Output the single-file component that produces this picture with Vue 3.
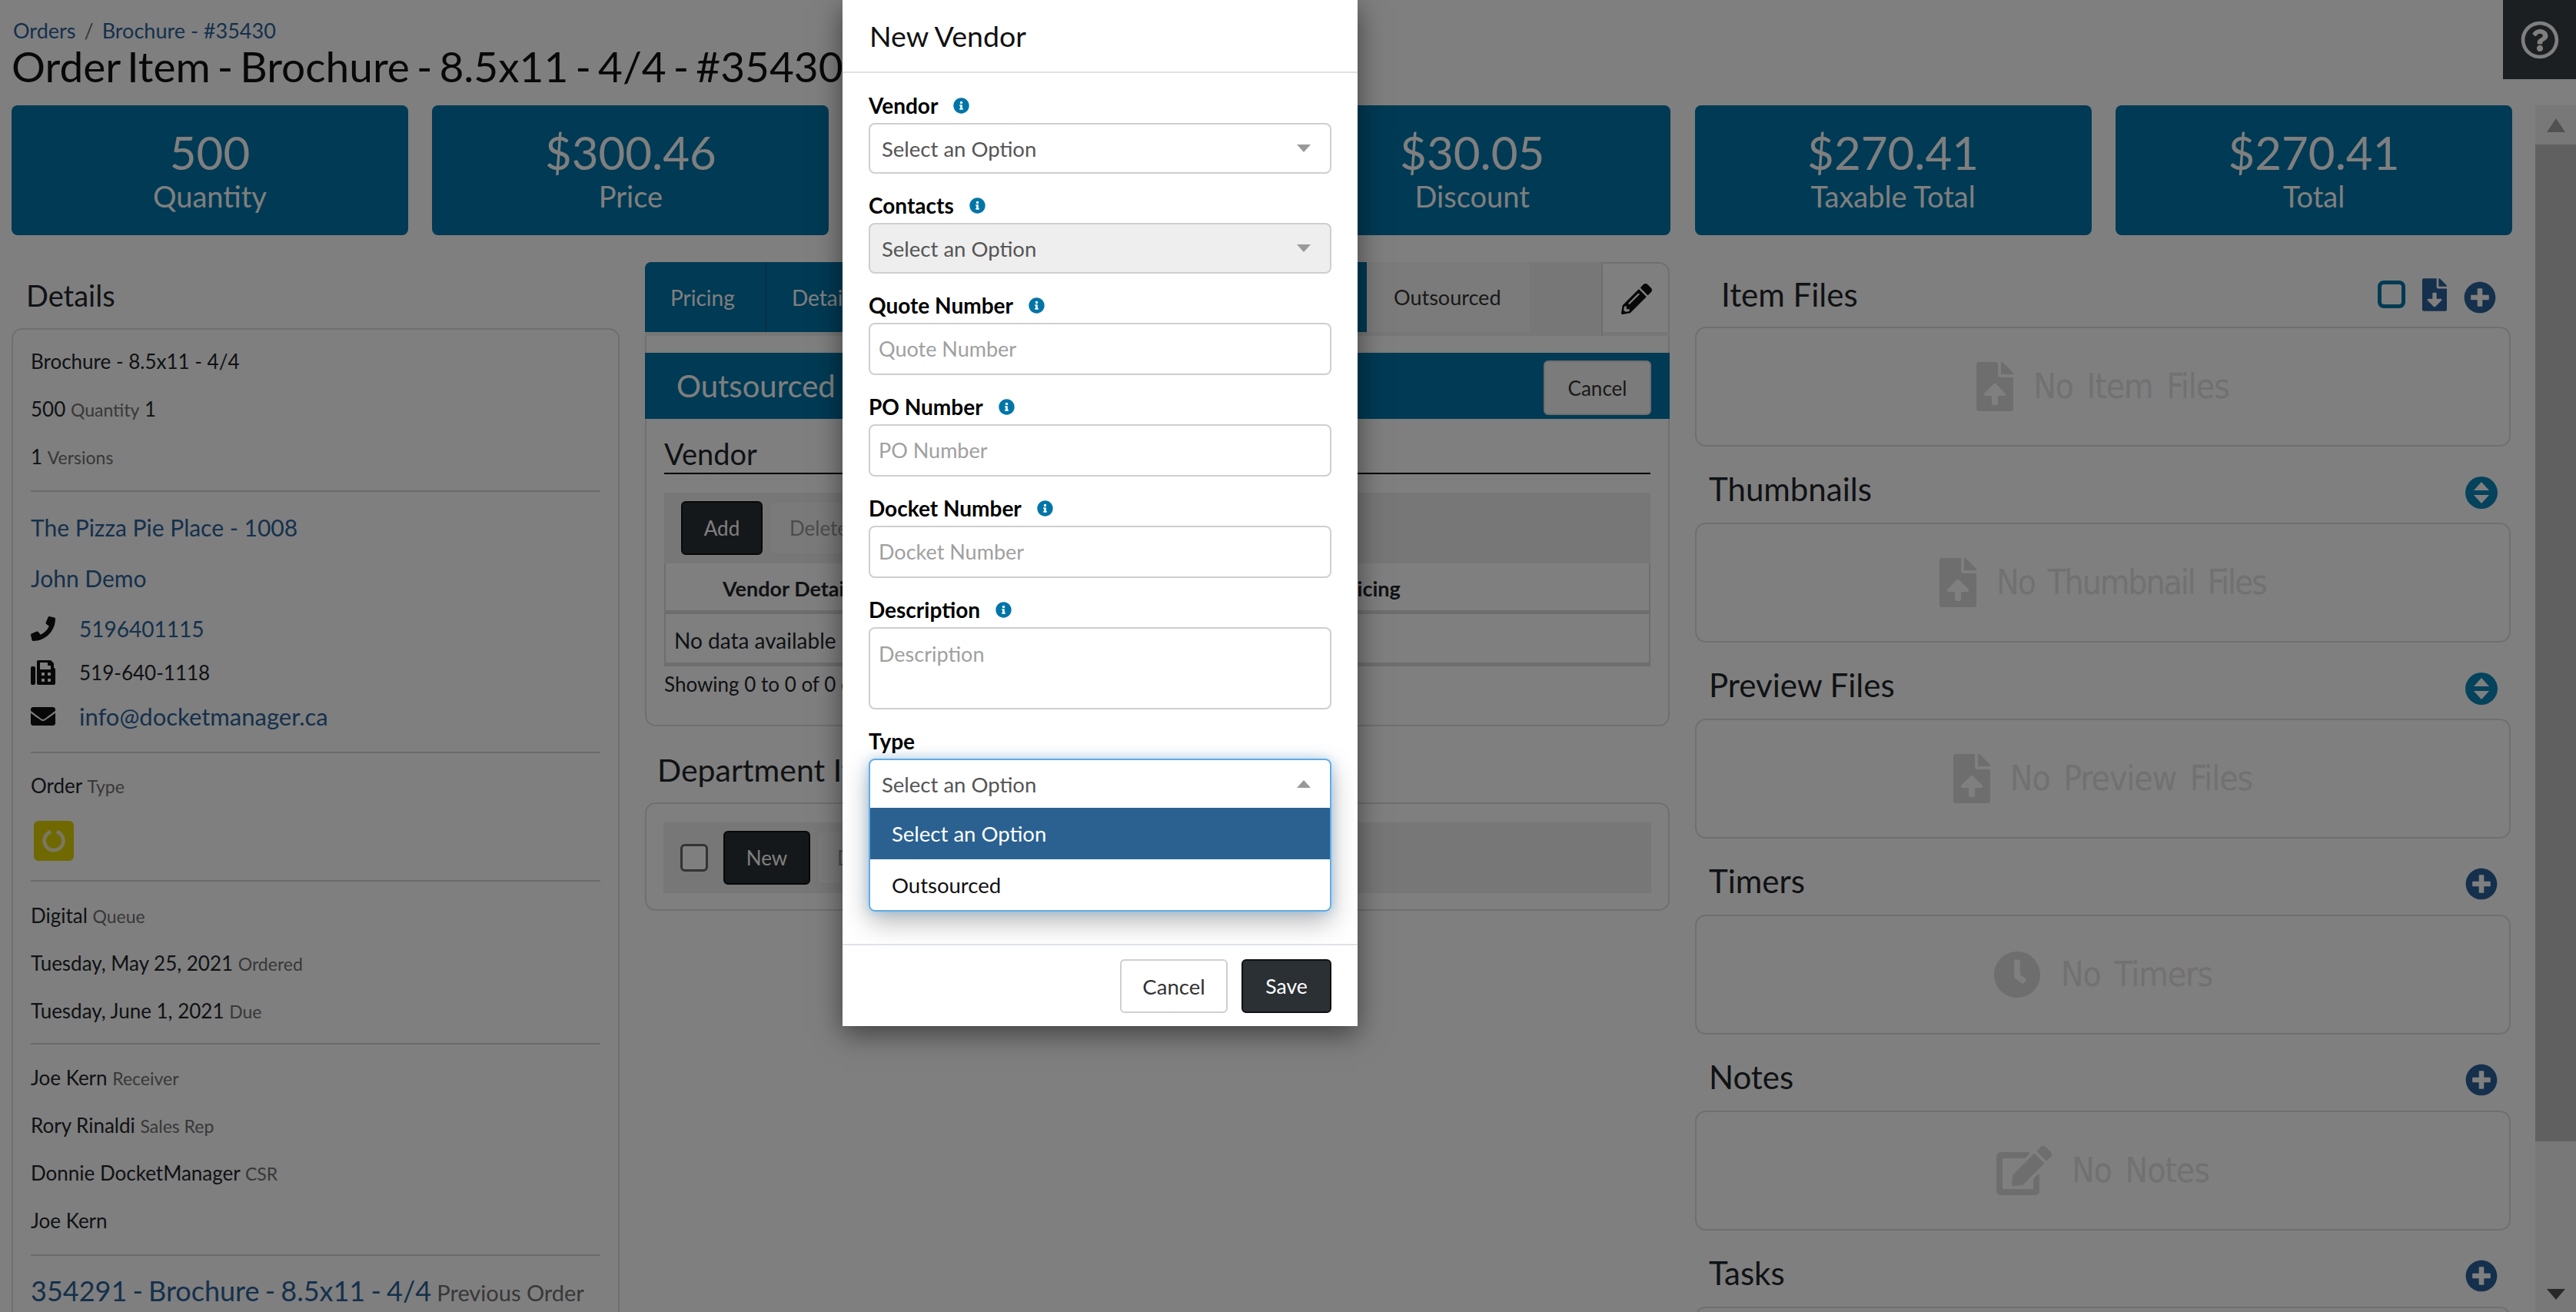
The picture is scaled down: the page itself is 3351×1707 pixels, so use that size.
<script setup>
const stats = [
  ['500', 'Quantity'], ['$300.46', 'Price'], ['$330.51', 'Subtotal'],
  ['$30.05', 'Discount'], ['$270.41', 'Taxable Total'], ['$270.41', 'Total']
]
const P = {
  plus: 'M256 8C119 8 8 119 8 256s111 248 248 248 248-111 248-248S393 8 256 8zm144 276c0 6.6-5.4 12-12 12h-92v92c0 6.6-5.4 12-12 12h-56c-6.6 0-12-5.4-12-12v-92h-92c-6.6 0-12-5.4-12-12v-56c0-6.6 5.4-12 12-12h92v-92c0-6.6 5.4-12 12-12h56c6.6 0 12 5.4 12 12v92h92c6.6 0 12 5.4 12 12v56z',
  info: 'M256 8C119.043 8 8 119.083 8 256c0 136.997 111.043 248 248 248s248-111.003 248-248C504 119.083 392.957 8 256 8zm0 110c23.196 0 42 18.804 42 42s-18.804 42-42 42-42-18.804-42-42 18.804-42 42-42zm56 254c0 6.627-5.373 12-12 12h-88c-6.627 0-12-5.373-12-12v-24c0-6.627 5.373-12 12-12h12v-64h-12c-6.627 0-12-5.373-12-12v-24c0-6.627 5.373-12 12-12h64c6.627 0 12 5.373 12 12v100h12c6.627 0 12 5.373 12 12v24z',
  upload: 'M224 136V0H24C10.7 0 0 10.7 0 24v464c0 13.3 10.7 24 24 24h336c13.3 0 24-10.7 24-24V160H248c-13.2 0-24-10.8-24-24zm65.18 216.01H224v80c0 8.84-7.16 16-16 16h-32c-8.84 0-16-7.16-16-16v-80H94.82c-14.28 0-21.41-17.29-11.27-27.36l96.42-95.7c6.65-6.61 17.39-6.61 24.04 0l96.42 95.7c10.15 10.07 3.03 27.36-11.25 27.36zM377 105L279.1 7c-4.5-4.5-10.6-7-17-7H256v128h128v-6.1c0-6.3-2.5-12.4-7-16.9z',
  download: 'M224 136V0H24C10.7 0 0 10.7 0 24v464c0 13.3 10.7 24 24 24h336c13.3 0 24-10.7 24-24V160H248c-13.2 0-24-10.8-24-24zm76.45 211.36l-96.42 95.7c-6.65 6.61-17.39 6.61-24.04 0l-96.42-95.7C73.42 337.29 80.54 320 94.82 320H160v-80c0-8.84 7.16-16 16-16h32c8.84 0 16 7.16 16 16v80h65.18c14.28 0 21.4 17.29 11.27 27.36zM377 105L279.1 7c-4.5-4.5-10.6-7-17-7H256v128h128v-6.1c0-6.3-2.5-12.4-7-16.9z',
  clock: 'M256,8C119,8,8,119,8,256S119,504,256,504,504,393,504,256,393,8,256,8Zm92.49,313h0l-20,25a16,16,0,0,1-22.49,2.5h0l-67-49.72a40,40,0,0,1-15-31.23V112a16,16,0,0,1,16-16h32a16,16,0,0,1,16,16V256l58,42.5A16,16,0,0,1,348.49,321Z',
  phone: 'M493.4 24.6l-104-24c-11.3-2.6-22.9 3.3-27.5 13.9l-48 112c-4.2 9.8-1.4 21.3 6.9 28l60.6 49.6c-36 76.7-98.9 140.5-177.2 177.2l-49.6-60.6c-6.8-8.3-18.2-11.1-28-6.9l-112 48C3.9 366.5-2 378.1.6 389.4l24 104C27.1 504.2 36.7 512 48 512c256.1 0 464-207.5 464-464 0-11.2-7.7-20.9-18.6-23.4z',
  fax: 'M480 160V77.25a32 32 0 0 0-9.38-22.63L425.37 9.37A32 32 0 0 0 402.75 0H160a32 32 0 0 0-32 32v448a32 32 0 0 0 32 32h320a32 32 0 0 0 32-32V192a32 32 0 0 0-32-32zM288 432a16 16 0 0 1-16 16h-32a16 16 0 0 1-16-16v-32a16 16 0 0 1 16-16h32a16 16 0 0 1 16 16zm0-128a16 16 0 0 1-16 16h-32a16 16 0 0 1-16-16v-32a16 16 0 0 1 16-16h32a16 16 0 0 1 16 16zm128 128a16 16 0 0 1-16 16h-32a16 16 0 0 1-16-16v-32a16 16 0 0 1 16-16h32a16 16 0 0 1 16 16zm0-128a16 16 0 0 1-16 16h-32a16 16 0 0 1-16-16v-32a16 16 0 0 1 16-16h32a16 16 0 0 1 16 16zm0-112H192V48h160v48a16 16 0 0 0 16 16h48zM64 128H32a32 32 0 0 0-32 32v320a32 32 0 0 0 32 32h32a32 32 0 0 0 32-32V160a32 32 0 0 0-32-32z',
  mail: 'M502.3 190.8c3.9-3.1 9.7-.2 9.7 4.7V400c0 26.5-21.5 48-48 48H48c-26.5 0-48-21.5-48-48V195.6c0-5 5.7-7.8 9.7-4.7 22.4 17.4 52.1 39.5 154.1 113.6 21.1 15.4 56.7 47.8 92.2 47.6 35.7.3 72-32.8 92.3-47.6 102-74.1 131.6-96.3 154-113.7zM256 320c23.2.4 56.6-29.2 73.4-41.4 132.7-96.3 142.8-104.7 173.4-128.7 5.8-4.5 9.2-11.5 9.2-18.9v-19c0-26.5-21.5-48-48-48H48C21.5 64 0 85.5 0 112v19c0 7.4 3.4 14.3 9.2 18.9 30.6 23.9 40.7 32.4 173.4 128.7 16.8 12.2 50.2 41.8 73.4 41.4z',
  pencil: 'M497.9 142.1l-46.1 46.1c-4.7 4.7-12.3 4.7-17 0l-111-111c-4.7-4.7-4.7-12.3 0-17l46.1-46.1c18.7-18.7 49.1-18.7 67.9 0l60.1 60.1c18.8 18.7 18.8 49.1 0 67.9zM284.2 99.8L21.6 362.4.4 483.9c-2.9 16.4 11.4 30.6 27.8 27.8l121.5-21.3 262.6-262.6c4.7-4.7 4.7-12.3 0-17l-111-111c-4.8-4.7-12.4-4.7-17.1 0zM124.1 339.9c-5.5-5.5-5.5-14.3 0-19.8l154-154c5.5-5.5 14.3-5.5 19.8 0s5.5 14.3 0 19.8l-154 154c-5.5 5.5-14.3 5.5-19.8 0zM88 424h48v36.3l-64.5 11.3-31.1-31.1L51.7 376H88v48z',
  edit: 'M402.6 83.2l90.2 90.2c3.8 3.8 3.8 10 0 13.8L274.4 405.6l-92.8 10.3c-12.4 1.4-22.9-9.1-21.5-21.5l10.3-92.8L388.8 83.2c3.8-3.8 10-3.8 13.8 0zm162-22.9l-48.8-48.8c-15.2-15.2-39.9-15.2-55.2 0l-35.4 35.4c-3.8 3.8-3.8 10 0 13.8l90.2 90.2c3.8 3.8 10 3.8 13.8 0l35.4-35.4c15.2-15.3 15.2-40 0-55.2zM384 346.2V448H64V128h229.8c3.2 0 6.2-1.3 8.5-3.5l40-40c7.6-7.6 2.2-20.5-8.5-20.5H48C21.5 64 0 85.5 0 112v352c0 26.5 21.5 48 48 48h352c26.5 0 48-21.5 48-48V306.2c0-10.7-12.9-16-20.5-8.5l-40 40c-2.2 2.3-3.5 5.3-3.5 8.5z',
  help: 'M256 8C119.043 8 8 119.083 8 256c0 136.997 111.043 248 248 248s248-111.003 248-248C504 119.083 392.957 8 256 8zm0 448c-110.532 0-200-89.431-200-200 0-110.495 89.472-200 200-200 110.491 0 200 89.471 200 200 0 110.53-89.431 200-200 200zm107.244-255.2c0 67.052-72.421 68.084-72.421 92.863V300c0 6.627-5.373 12-12 12h-45.647c-6.627 0-12-5.373-12-12v-8.659c0-35.745 27.1-50.034 47.579-61.516 17.561-9.845 28.324-16.541 28.324-29.579 0-17.246-21.999-28.693-39.784-28.693-23.189 0-33.894 10.977-48.942 29.969-4.057 5.12-11.46 6.071-16.666 2.124l-27.824-21.098c-5.107-3.872-6.251-11.066-2.644-16.363C184.846 131.491 214.94 112 261.794 112c49.071 0 101.45 38.304 101.45 88.8zM298 368c0 23.159-18.841 42-42 42s-42-18.841-42-42 18.841-42 42-42 42 18.841 42 42z'
}
const panels = [
  { title: 'Thumbnails', action: 'sort', icon: 'upload', vb: '0 0 384 512', empty: 'No Thumbnail Files', track: -2 },
  { title: 'Preview Files', action: 'sort', icon: 'upload', vb: '0 0 384 512', empty: 'No Preview Files', track: -1 },
  { title: 'Timers', action: 'plus', icon: 'clock', vb: '0 0 512 512', empty: 'No Timers', track: -1 },
  { title: 'Notes', action: 'plus', icon: 'edit', vb: '0 0 576 512', empty: 'No Notes', track: -1 }
]
const fields = [
  { label: 'Quote Number' }, { label: 'PO Number' }, { label: 'Docket Number' }
]
</script>

<template>
  <div class="page">
    <header class="top">
      <nav class="crumbs"><a>Orders</a><i>/</i><a>Brochure - #35430</a></nav>
      <h1>Order Item - Brochure - 8.5x11 - 4/4 - #354301</h1>
      <button class="help"><svg viewBox="0 0 512 512"><path :d="P.help" /></svg></button>
    </header>

    <div class="body">
      <main class="content">
        <section class="stats">
          <div v-for="s in stats" :key="s[1]" class="stat">
            <div class="num">{{ s[0] }}</div>
            <div class="cap">{{ s[1] }}</div>
          </div>
        </section>

        <div class="cols">
          <aside class="left">
            <h3 class="details-h">Details</h3>
            <div class="card details">
              <div class="sec s1">
                <p>Brochure - 8.5x11 - 4/4</p>
                <p>500 <small>Quantity</small> 1</p>
                <p>1 <small>Versions</small></p>
              </div>
              <div class="sec contact">
                <p class="lnk"><a>The Pizza Pie Place - 1008</a></p>
                <p class="lnk"><a>John Demo</a></p>
                <p class="ico ph"><svg viewBox="0 0 512 512"><path :d="P.phone" /></svg><a>5196401115</a></p>
                <p class="ico"><svg viewBox="0 0 512 512"><path :d="P.fax" /></svg>519-640-1118</p>
                <p class="ico em"><svg viewBox="0 0 512 512"><path :d="P.mail" /></svg><a>info@docketmanager.ca</a></p>
              </div>
              <div class="sec order">
                <p>Order <small>Type</small></p>
                <div class="badge"><svg viewBox="0 0 40 40"><path d="M16 7.5a13 13 0 1 0 8 0" /></svg></div>
              </div>
              <div class="sec s4">
                <p>Digital <small>Queue</small></p>
                <p>Tuesday, May 25, 2021 <small>Ordered</small></p>
                <p>Tuesday, June 1, 2021 <small>Due</small></p>
              </div>
              <div class="sec s5">
                <p>Joe Kern <small>Receiver</small></p>
                <p>Rory Rinaldi <small>Sales Rep</small></p>
                <p>Donnie DocketManager <small>CSR</small></p>
                <p>Joe Kern</p>
              </div>
              <div class="sec prev">
                <a>354291 - Brochure - 8.5x11 - 4/4</a> <small>Previous Order</small>
              </div>
            </div>
          </aside>

          <div class="center">
            <div class="card main">
              <div class="tabs">
                <span class="tab t1">Pricing</span>
                <span class="tab t2">Details</span>
                <span class="tab on">Outsourced</span>
                <span class="spacer"></span>
                <span class="pen"><svg viewBox="0 0 512 512"><path :d="P.pencil" /></svg></span>
              </div>
              <div class="bar">
                <span>Outsourced Services</span>
                <button class="btn-cancel">Cancel</button>
              </div>
              <div class="inner">
                <h3 class="vendor-h">Vendor</h3>
                <div class="toolbar">
                  <button class="dark add">Add</button>
                  <button class="ghost">Delete</button>
                </div>
                <div class="th">
                  <b class="th1">Vendor Details</b>
                  <b class="th2">Pricing</b>
                </div>
                <div class="td">No data available in table</div>
                <div class="showing">Showing 0 to 0 of 0 entries</div>
              </div>
            </div>
            <h3 class="dept-h">Department Items</h3>
            <div class="card dept">
              <div class="toolbar t2b">
                <span class="check"></span>
                <button class="dark new">New</button>
                <button class="ghost">Delete</button>
              </div>
            </div>
          </div>

          <aside class="right">
            <div class="head first">
              <h3>Item Files</h3>
              <div class="acts">
                <span class="box"></span>
                <svg class="dl" viewBox="0 0 384 512"><path :d="P.download" /></svg>
                <svg class="pl" viewBox="0 0 512 512"><path :d="P.plus" /></svg>
              </div>
            </div>
            <div class="card empty">
              <svg class="eico" viewBox="0 0 384 512"><path :d="P.upload" /></svg>
              <span>No Item Files</span>
            </div>
            <template v-for="p in panels" :key="p.title">
              <div class="head">
                <h3>{{ p.title }}</h3>
                <svg v-if="p.action === 'plus'" class="pl" viewBox="0 0 512 512"><path :d="P.plus" /></svg>
                <svg v-else class="sort" viewBox="0 0 42 42">
                  <circle cx="21" cy="21" r="21" />
                  <path class="w" d="M21 7l10 11H11zM21 35l10-11H11z" />
                </svg>
              </div>
              <div class="card empty">
                <svg class="eico" :class="p.icon" :viewBox="p.vb"><path :d="P[p.icon]" /></svg>
                <span :style="{ letterSpacing: p.track + 'px' }">{{ p.empty }}</span>
              </div>
            </template>
            <div class="head">
              <h3>Tasks</h3>
              <svg class="pl" viewBox="0 0 512 512"><path :d="P.plus" /></svg>
            </div>
            <div class="card empty"></div>
          </aside>
        </div>
      </main>

      <div class="scrollbar">
        <div class="sb-btn"><i class="up"></i></div>
        <div class="thumb"></div>
        <div class="sb-end"><i class="down"></i></div>
      </div>
    </div>

    <div class="overlay">
      <div class="modal">
        <div class="m-head">New Vendor</div>
        <div class="m-body">
          <div class="field">
            <label>Vendor <svg class="inf" viewBox="0 0 512 512"><path :d="P.info" /></svg></label>
            <div class="sel"><span>Select an Option</span><i class="caret"></i></div>
          </div>
          <div class="field">
            <label>Contacts <svg class="inf" viewBox="0 0 512 512"><path :d="P.info" /></svg></label>
            <div class="sel off"><span>Select an Option</span><i class="caret"></i></div>
          </div>
          <div v-for="f in fields" :key="f.label" class="field">
            <label>{{ f.label }} <svg class="inf" viewBox="0 0 512 512"><path :d="P.info" /></svg></label>
            <div class="inp">{{ f.label }}</div>
          </div>
          <div class="field">
            <label>Description <svg class="inf" viewBox="0 0 512 512"><path :d="P.info" /></svg></label>
            <div class="inp area">Description</div>
          </div>
          <div class="field last">
            <label>Type</label>
            <div class="sel open">
              <div class="trigger"><span>Select an Option</span><i class="caret up"></i></div>
              <div class="opt hi">Select an Option</div>
              <div class="opt">Outsourced</div>
            </div>
          </div>
        </div>
        <div class="m-foot">
          <button class="b-cancel">Cancel</button>
          <button class="b-save">Save</button>
        </div>
      </div>
    </div>
  </div>
</template>

<style>
html, body { margin: 0; background: #fff; }
</style>

<style scoped>
.page {
  position: relative;
  width: 3351px;
  height: 1707px;
  overflow: hidden;
  background: #fff;
  color: #212529;
  font-family: Lato, "Noto Sans", sans-serif;
  font-size: 26px;
  line-height: 42px;
}
a { color: #2a6199; }
svg { display: block; }
p { margin: 0; }
h1, h3 { margin: 0; font-weight: 400; }
button { font-family: inherit; }

.top { position: relative; height: 137px; padding-left: 17px; box-sizing: border-box; }
.crumbs { height: 62px; padding-top: 19px; box-sizing: border-box; font-size: 27px; line-height: 42px; }
.crumbs i { font-style: normal; color: #6c757d; margin: 0 11px; }
h1 { font-size: 55px; line-height: 48px; white-space: nowrap; color: #111; margin-left: -2px; word-spacing: -5px; }
.help {
  position: absolute; top: 0; right: 0; width: 95px; height: 103px;
  background: #383e42; border: 0; padding: 0;
  display: flex; align-items: center; justify-content: center;
}
.help svg { width: 50px; height: 50px; fill: #fff; }

.body { display: flex; height: 1570px; }
.content { width: 3298px; padding-left: 15px; box-sizing: border-box; }
.stats { display: flex; gap: 31.4px; height: 169px; margin-bottom: 35px; }
.stat {
  width: 516px; height: 169px; border-radius: 8px; background: #0275a8; color: #fff;
  text-align: center; box-sizing: border-box; padding-top: 29px;
}
.num { font-size: 60px; line-height: 64px; }
.cap { font-size: 38px; line-height: 50px; }

.cols { display: flex; align-items: flex-start; }
.card { border: 2px solid #dfdfdf; border-radius: 14px; background: #fff; box-sizing: border-box; }

.left { width: 791px; margin-right: 33px; }
.details-h { font-size: 38px; line-height: 86px; height: 86px; padding-left: 19px; }
.details { padding: 0 23px; height: 1400px; }
.sec { padding: 22px 0 21px; border-top: 2px solid #d5d5d5; }
.sec:first-child { border-top: 0; }
.sec > p { margin-bottom: 20px; }
.sec > p:last-child { margin-bottom: 0; }
small { font-size: 23px; color: #707070; line-height: 1; }
.s1 { padding: 20px 0 23px; }
.s4 { padding-top: 23px; }
.s5 { padding-bottom: 23px; }
.contact { padding-bottom: 25px; padding-top: 22px; }
.contact .lnk { font-size: 30px; line-height: 48px; margin-bottom: 18px; }
.contact .lnk + .ico { margin-top: 21px; }
.contact .ico { display: flex; align-items: center; margin-bottom: 15px; }
.contact .ico svg { width: 32px; height: 32px; margin-right: 31px; fill: #111; }
.contact .ph a { font-size: 28px; }
.contact .em a { font-size: 31px; }
.order { padding: 21px 0 25px; }
.badge {
  width: 52px; height: 52px; background: #e1d000; border-radius: 6px; margin: 25px 0 0 4px;
  display: flex; align-items: center; justify-content: center;
}
.badge svg { width: 38px; height: 38px; }
.badge path { fill: none; stroke: #f6f0c0; stroke-width: 5; }
.prev { font-size: 36px; line-height: 50px; padding-top: 20px; white-space: nowrap; word-spacing: -2px; }
.prev small { font-size: 29px; word-spacing: 0; }

.center { width: 1333px; margin-right: 33px; }
.main { height: 604px; }
.tabs { display: flex; border-bottom: 5px solid #eeeeee; box-sizing: content-box; margin: -2px -2px 0; height: 91px; }
.tab { display: flex; align-items: center; font-size: 28px; box-sizing: border-box; padding-left: 33px; height: 91px; }
.t1 { width: 158px; background: #0275a8; color: #fff; border-radius: 8px 0 0 0; border-right: 1px solid #02506f; }
.t2 { width: 781px; background: #0275a8; color: #fff; }
.on { width: 212px; background: #f7f7f7; color: #333; padding-left: 35px; font-size: 27px; }
.spacer { width: 93px; background: #eeeeee; }
.pen { flex: 1; display: flex; align-items: center; justify-content: center; border-left: 2px solid #ddd; height: 96px; }
.pen svg { width: 40px; height: 40px; fill: #111; }
.bar {
  margin: 22px -2px 0; height: 86px; background: #0275a8; color: #fff;
  display: flex; align-items: center; justify-content: space-between;
  font-size: 40px; padding: 0 24px 0 41px; box-sizing: border-box;
}
.btn-cancel {
  width: 140px; height: 71px; background: #f7f7f7; border: 2px solid #ddd; border-radius: 6px;
  color: #333; font-size: 26px; margin-top: 5px;
}
.inner { padding: 24px 23px 0; }
.vendor-h { font-size: 38px; line-height: 42px; border-bottom: 2px solid #000; height: 46px; }
.toolbar { background: #eeeeee; display: flex; align-items: center; }
.inner .toolbar { margin-top: 24px; height: 92px; padding-left: 22px; gap: 8px; }
.dark { background: #2b3035; color: #fff; border: 2px solid #111; border-radius: 6px; font-size: 26px; }
.add { width: 106px; height: 70px; }
.ghost { width: 130px; height: 70px; background: #f5f5f5; border: 2px solid #ececec; color: #999; border-radius: 6px; font-size: 26px; }
.th { height: 66px; padding-top: 5px; border: 2px solid #ddd; border-top: 0; border-bottom: 5px solid #dcdcdc; box-sizing: border-box; display: flex; align-items: center; font-size: 27px; }
.th1 { margin-left: 74px; }
.th2 { margin-left: 622px; }
.td { height: 68px; padding-top: 4px; border: 2px solid #ddd; border-top: 0; border-bottom: 5px solid #dcdcdc; box-sizing: border-box; padding-left: 11px; display: flex; align-items: center; font-size: 28px; white-space: nowrap; }
.showing { line-height: 46px; }
.dept-h { font-size: 41px; line-height: 50px; margin: 32px 0 17px 16px; }
.dept { height: 141px; padding: 24px 22px 0; }
.t2b { height: 92px; padding-left: 22px; }
.check { width: 36px; height: 36px; border: 3px solid #666; border-radius: 6px; background: #fff; box-sizing: border-box; margin-right: 20px; }
.new { width: 113px; height: 70px; margin-right: 8px; }

.right { width: 1061px; }
.head { height: 88px; margin-top: 11px; display: flex; align-items: center; justify-content: space-between; padding: 0 17px 0 18px; }
.head.first { height: 84px; margin-top: 0; padding-left: 34px; padding-right: 19px; }
.head h3 { font-size: 42px; line-height: 50px; }
.acts { display: flex; align-items: center; gap: 22px; }
.box { width: 36px; height: 36px; border: 5px solid #0275a8; border-radius: 8px; box-sizing: border-box; }
.dl { width: 32px; height: 43px; fill: #2a6199; }
.pl { width: 42px; height: 42px; fill: #2a6199; margin-top: 8px; }
.sort circle { fill: #0a86b8; }
.sort { width: 42px; height: 42px; margin-top: 10px; }
.sort .w { fill: #fff; }
.empty {
  height: 156px; display: flex; align-items: center; justify-content: center; gap: 26px;
  color: #e2e2e2; font-size: 44px; font-weight: 300; letter-spacing: -1px; word-spacing: 6px;
  font-family: "DejaVu Sans Condensed", "DejaVu Sans", sans-serif; font-stretch: condensed;
}
.eico { height: 64px; width: 48px; fill: #dcdcdc; }
.eico.clock { width: 62px; height: 62px; }
.eico.edit { width: 72px; height: 64px; }

.scrollbar { width: 53px; height: 1570px; background: #f1f1f1; display: flex; flex-direction: column; }
.sb-btn { height: 51px; display: flex; align-items: center; justify-content: center; }
.sb-btn .up, .sb-end .down { width: 0; height: 0; border-left: 12px solid transparent; border-right: 12px solid transparent; }
.sb-btn .up { border-bottom: 18px solid #a3a3a3; }
.thumb { height: 1297px; background: #c1c1c1; }
.sb-end { flex: 1; display: flex; align-items: flex-end; justify-content: center; padding-bottom: 16px; }
.sb-end .down { border-top: 14px solid #505050; }

.overlay { position: absolute; inset: 0; background: rgba(0, 0, 0, .5); }
.modal {
  width: 670px; height: 1335px; margin-left: 1096px; background: #fff;
  box-shadow: 0 10px 34px rgba(0, 0, 0, .5); color: #212529; font-size: 27.5px;
  display: flex; flex-direction: column;
}
.m-head { height: 95px; box-sizing: border-box; flex: none; line-height: 93px; font-size: 37.5px; padding-left: 35px; border-bottom: 2px solid #dee2e6; color: #111; }
.m-body { padding: 22px 34px 0 34px; flex: 1; min-height: 0; box-sizing: border-box; }
.field { margin-bottom: 21px; }
.field.last { margin-bottom: 0; }
label { display: flex; align-items: center; gap: 14px; font-weight: 700; height: 43px; box-sizing: border-box; padding-bottom: 3px; line-height: 40px; color: #000; font-size: 28px; }
.inf { width: 21px; height: 21px; fill: #0275a8; margin-left: 6px; }
.sel {
  height: 66px; border: 2px solid #cfcfcf; border-radius: 8px; box-sizing: border-box;
  display: flex; align-items: center; justify-content: space-between; padding: 2px 25px 0 15px; color: #555;
}
.sel.off { background: #eee; }
.caret { width: 0; height: 0; margin-top: -2px; border-left: 9px solid transparent; border-right: 9px solid transparent; border-top: 10px solid #999; }
.caret.up { border-top: 0; border-bottom: 10px solid #999; }
.inp {
  height: 68px; border: 2px solid #cfcfcf; border-radius: 8px; box-sizing: border-box;
  padding-left: 11px; color: #a0a0a0; line-height: 64px; font-size: 27px;
}
.inp.area { height: 107px; line-height: 66px; }
.sel.open {
  display: block; height: 199px; padding: 0; border-color: #62abe6; overflow: hidden;
  box-shadow: 0 0 14px rgba(98, 171, 230, .45), 0 14px 34px rgba(0, 0, 0, .28);
}
.trigger { height: 62px; padding-top: 2px; box-sizing: border-box; display: flex; align-items: center; justify-content: space-between; padding-right: 25px; padding-left: 15px; }
.opt { height: 66px; line-height: 68px; padding-left: 28px; color: #111; }
.opt.hi { background: #2a6190; color: #fff; height: 67px; line-height: 67px; }
.m-foot {
  height: 107px; flex: none; border-top: 2px solid #dee2e6; display: flex; justify-content: flex-end; align-items: flex-start;
  padding: 18px 34px 0 0; gap: 18px; box-sizing: border-box;
}
.b-cancel { width: 140px; height: 70px; border: 2px solid #cfcfcf; background: #fff; border-radius: 6px; font-size: 27.5px; color: #333; }
.b-save { width: 117px; height: 70px; border: 2px solid #111; background: #2b3035; border-radius: 6px; font-size: 26.5px; color: #fff; }
</style>
